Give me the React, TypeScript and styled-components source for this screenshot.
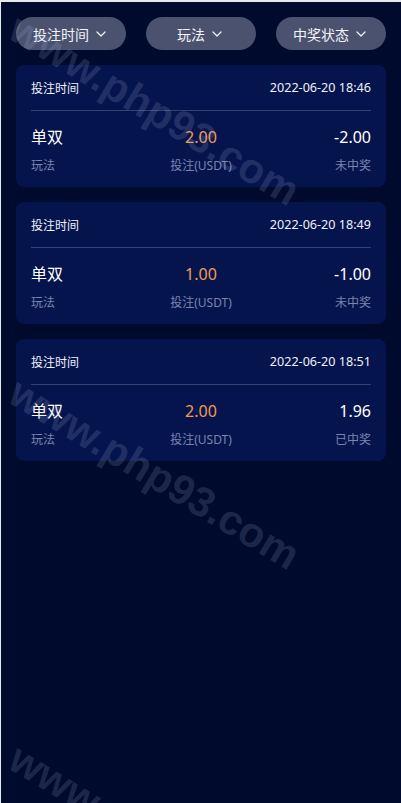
import styled, { createGlobalStyle } from 'styled-components';
import { ChevronDown } from 'lucide-react';

const GlobalStyle = createGlobalStyle`
  html, body {
    margin: 0;
    padding: 0;
    background: #e9e9ec;
  }
  body {
    padding: 2px 0 0 1px;
    font-family: "Noto Sans", "Noto Sans CJK SC", sans-serif;
  }
`;

type Record = {
  time: string;
  play: string;
  amount: string;
  result: string;
  status: string;
};

const records: Record[] = [
  { time: '2022-06-20 18:46', play: '单双', amount: '2.00', result: '-2.00', status: '未中奖' },
  { time: '2022-06-20 18:49', play: '单双', amount: '1.00', result: '-1.00', status: '未中奖' },
  { time: '2022-06-20 18:51', play: '单双', amount: '2.00', result: '1.96', status: '已中奖' },
];

const filters = ['投注时间', '玩法', '中奖状态'];

// vertical start of each repeated watermark
const watermarks = [2, 366, 732];

export default function App() {
  return (
    <>
      <GlobalStyle />
      <Page>
        <FilterBar>
          {filters.map((f) => (
            <FilterButton key={f}>
              {f}
              <ChevronDown size={16} strokeWidth={1.8} />
            </FilterButton>
          ))}
        </FilterBar>
        <List>
          {records.map((r) => (
            <Card key={r.time}>
              <CardHeader>
                <span>投注时间</span>
                <DateText>{r.time}</DateText>
              </CardHeader>
              <Stats>
                <Stat $align="left">
                  <Value>{r.play}</Value>
                  <Label>玩法</Label>
                </Stat>
                <Stat $align="center">
                  <Value $accent>{r.amount}</Value>
                  <Label>投注(USDT)</Label>
                </Stat>
                <Stat $align="right">
                  <Value>{r.result}</Value>
                  <Label>{r.status}</Label>
                </Stat>
              </Stats>
            </Card>
          ))}
        </List>
        {watermarks.map((top) => (
          <Watermark key={top} style={{ top }}>
            www.php93.com
          </Watermark>
        ))}
      </Page>
    </>
  );
}

const Page = styled.div`
  position: relative;
  overflow: hidden;
  min-height: 801px;
  background: #000a2c;
  padding: 15px 15px;
  box-sizing: border-box;
`;

const FilterBar = styled.div`
  display: flex;
  justify-content: space-between;
`;

const FilterButton = styled.button`
  width: 110px;
  height: 33px;
  border: none;
  border-radius: 17px;
  background: #4a5270;
  color: #f2f4fa;
  font-family: "Noto Sans CJK SC", sans-serif;
  font-size: 14px;
  display: flex;
  align-items: center;
  justify-content: center;
  gap: 4px;
  padding: 0;

  svg {
    margin-top: 1px;
  }
`;

const List = styled.div`
  margin-top: 15px;
  display: flex;
  flex-direction: column;
  gap: 15px;
`;

const Card = styled.div`
  background: #06144d;
  border-radius: 8px;
  padding: 0 15px 13px;
`;

const CardHeader = styled.div`
  height: 45px;
  display: flex;
  align-items: center;
  justify-content: space-between;
  border-bottom: 1px solid #36426f;
  color: #eef1fa;
  font-size: 12px;
  font-family: "Noto Sans", "Noto Sans CJK SC", sans-serif;
`;

const DateText = styled.span`
  font-size: 12.6px;
`;

const Stats = styled.div`
  display: grid;
  grid-template-columns: 1fr 1fr 1fr;
  padding-top: 15px;
`;

const Stat = styled.div<{ $align: 'left' | 'center' | 'right' }>`
  display: flex;
  flex-direction: column;
  text-align: ${(p) => p.$align};
  gap: 9px;
`;

const Value = styled.span<{ $accent?: boolean }>`
  font-size: 16px;
  line-height: 22px;
  color: ${(p) => (p.$accent ? '#f29a55' : '#ffffff')};
  font-family: "Noto Sans", "Noto Sans CJK SC", sans-serif;
`;

const Label = styled.span`
  font-size: 12px;
  line-height: 17px;
  color: #7a84ad;
  font-family: "Noto Sans", "Noto Sans CJK SC", sans-serif;
`;

const Watermark = styled.span`
  position: absolute;
  left: 12px;
  transform-origin: 0 50%;
  transform: rotate(31deg);
  font-family: "Liberation Sans", Arial, sans-serif;
  font-weight: 700;
  font-size: 42px;
  line-height: 42px;
  color: rgba(180, 195, 235, 0.17);
  white-space: nowrap;
  pointer-events: none;
`;
